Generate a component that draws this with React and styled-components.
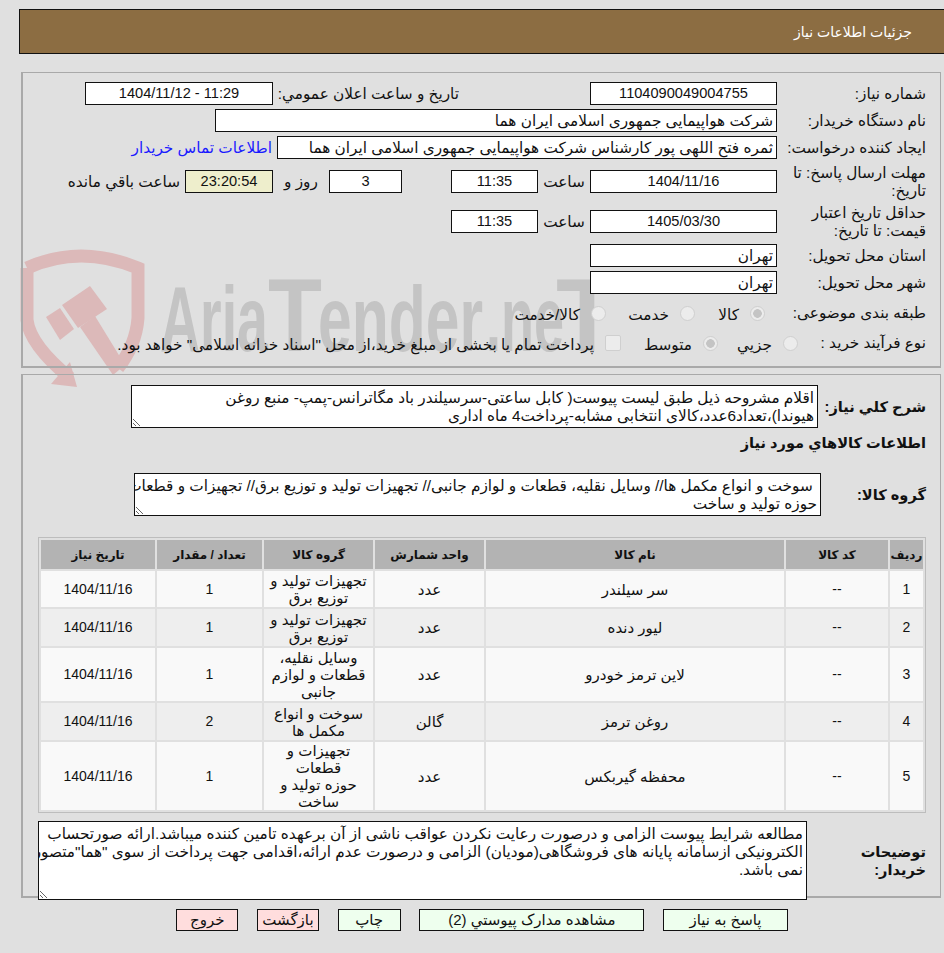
import React from 'react';
import styled, { createGlobalStyle } from 'styled-components';

const GlobalStyle = createGlobalStyle`
  html, body {
    margin: 0;
    background: #e0e0e0;
    overflow-x: hidden;
  }
  body {
    color: #111;
    font-family: "Liberation Sans", "DejaVu Sans", sans-serif;
    font-size: 15.3px;
  }
`;

const Page = styled.div`
  position: relative;
  direction: rtl;
  width: 944px;
  height: 953px;
  overflow: hidden;
  padding-top: 9px;
  box-sizing: border-box;
`;

const Watermark = styled.svg`
  position: absolute;
  left: 0;
  top: 0;
  z-index: 0;
`;

const Header = styled.div`
  position: relative;
  z-index: 1;
  box-sizing: border-box;
  height: 45px;
  margin-left: 19px;
  margin-right: -10px;
  padding-right: 41px;
  background: #8c6d42;
  border: 1px solid #111;
  color: #fff;
  font-size: 14px;
  line-height: 44px;
`;

const Panel = styled.div`
  position: relative;
  z-index: 1;
  box-sizing: border-box;
  width: 920px;
  margin: ${({ $top }) => $top}px 3px 0 0;
  padding: ${({ $pad }) => $pad};
  border: 2px solid #a9a9a9;
  border-width: 1px 1px 2px 2px;
  height: ${({ $height }) => $height}px;
`;

const Row = styled.div`
  display: flex;
  align-items: center;
  height: ${({ $height }) => $height || 23}px;
  margin-bottom: ${({ $gap }) => $gap || 0}px;
`;

const Label = styled.div`
  flex: none;
  box-sizing: border-box;
  width: ${({ $width }) => $width || 149}px;
  padding-left: 4px;
  line-height: 18px;
  font-size: ${({ $bold }) => ($bold ? '14.6px' : '15.3px')};
  font-weight: ${({ $bold }) => ($bold ? 700 : 400)};
`;

const Field = styled.div`
  flex: none;
  box-sizing: border-box;
  width: ${({ $width }) => $width}px;
  height: 23px;
  padding: 0 3px;
  margin-right: ${({ $before }) => $before || 0}px;
  background: ${({ $tint }) => ($tint ? '#eeeecc' : '#fff')};
  border: 1px solid #111;
  direction: ${({ $latin }) => ($latin ? 'ltr' : 'rtl')};
  font-size: ${({ $latin }) => ($latin ? '14.6px' : '15.3px')};
  line-height: 21px;
  text-align: ${({ $latin }) => ($latin ? 'center' : 'right')};
  white-space: nowrap;
  overflow: hidden;
`;

const Word = styled.div`
  flex: none;
  width: ${({ $width }) => $width}px;
  margin-right: ${({ $before }) => $before || 0}px;
  text-align: center;
  white-space: nowrap;
`;

const Caption = styled.div`
  flex: none;
  width: ${({ $width }) => $width}px;
  margin-right: ${({ $before }) => $before || 0}px;
  white-space: nowrap;
`;

const ContactLink = styled.a`
  margin-right: 5px;
  color: #1a1aff;
  white-space: nowrap;
`;

const Options = styled.div`
  display: flex;
  align-items: center;
  padding-right: ${({ $inset }) => $inset || 0}px;
`;

const Option = styled.div`
  display: flex;
  align-items: center;
  flex: none;
  width: ${({ $width }) => $width}px;
  white-space: nowrap;
`;

const OptionText = styled.span`
  margin-right: 11px;
  padding-top: 4px;
`;

const Radio = styled.span`
  flex: none;
  box-sizing: border-box;
  width: 15px;
  height: 15px;
  border-radius: 50%;
  background: ${({ $on }) =>
    $on ? 'radial-gradient(circle, #c4c4c4 0 4px, #ececec 4.6px)' : '#ececec'};
  border: 1px solid #cfcfcf;
`;

const Check = styled.span`
  flex: none;
  box-sizing: border-box;
  width: 16px;
  height: 16px;
  border-radius: 2px;
  background: #ececec;
  border: 1px solid #cfcfcf;
`;

const Box = styled.textarea`
  display: block;
  flex: none;
  box-sizing: border-box;
  width: ${({ $width }) => $width}px;
  height: ${({ $height }) => $height}px;
  padding: 3px 3px 0;
  background: #fff;
  border: 1px solid #111;
  border-radius: 0;
  color: #111;
  font-family: inherit;
  font-size: 15.3px;
  line-height: 18px;
  white-space: pre;
  overflow: hidden;
  outline: none;
`;

const Heading = styled.div`
  height: 30px;
  margin-bottom: 15px;
  font-size: 14.6px;
  font-weight: 700;
  line-height: 30px;
`;

const GoodsTable = styled.table`
  width: 888px;
  margin: 21px 0 8px;
  border: 1px solid #bdbdbd;
  border-spacing: 2px;
  table-layout: fixed;
  text-align: center;
`;

const HeadCell = styled.th`
  height: 29px;
  padding: 0;
  background: #b3b3b3;
  font-size: 12px;
  font-weight: 700;
  white-space: nowrap;
`;

const BodyRow = styled.tr`
  height: ${({ $height }) => $height}px;
  background: ${({ $odd }) => ($odd ? '#f9f9f9' : '#eeeeee')};
`;

const Cell = styled.td`
  padding: 0;
  line-height: 17px;
  white-space: pre-line;
  font-size: ${({ $latin }) => ($latin ? '14px' : '15px')};
`;

const ButtonBar = styled.div`
  position: relative;
  z-index: 1;
  display: flex;
  gap: 18.7px;
  margin-top: 11px;
  padding-right: 156px;
`;

const ActionButton = styled.button`
  box-sizing: border-box;
  width: ${({ $width }) => $width}px;
  height: 22px;
  padding: 0;
  background: ${({ $danger }) => ($danger ? '#ffdddd' : '#eeffee')};
  border: 1px solid #111;
  color: #111;
  font-family: inherit;
  font-size: 15px;
`;

const columns = [33, 102, 298, 109, 109, 105, 114];
const heads = ['رديف', 'كد كالا', 'نام كالا', 'واحد شمارش', 'گروه كالا', 'تعداد / مقدار', 'تاريخ نياز'];

const items = [
  { id: 1, name: 'سر سیلندر', unit: 'عدد', group: 'تجهیزات تولید و\nتوزیع برق', count: 1, height: 36 },
  { id: 2, name: 'لیور دنده', unit: 'عدد', group: 'تجهیزات تولید و\nتوزیع برق', count: 1, height: 37 },
  { id: 3, name: 'لاین ترمز خودرو', unit: 'عدد', group: 'وسایل نقلیه،\nقطعات و لوازم\nجانبی', count: 1, height: 53 },
  { id: 4, name: 'روغن ترمز', unit: 'گالن', group: 'سوخت و انواع\nمکمل ها', count: 2, height: 37 },
  { id: 5, name: 'محفظه گیربکس', unit: 'عدد', group: 'تجهیزات و قطعات\nحوزه تولید و\nساخت', count: 1, height: 53 },
];

const summary = 'اقلام مشروحه ذیل طبق لیست پیوست( کابل ساعتی-سرسیلندر باد مگاترانس-پمپ- منبع روغن\nهیوندا)،تعداد6عدد،کالای انتخابی مشابه-پرداخت4 ماه اداری';
const groups = ' سوخت و انواع مکمل ها// وسایل نقلیه، قطعات و لوازم جانبی// تجهیزات تولید و توزیع برق// تجهیزات و قطعات\nحوزه تولید و ساخت';
const notes = 'مطالعه شرایط پیوست الزامی و درصورت رعایت نکردن عواقب ناشی از آن برعهده تامین کننده میباشد.ارائه صورتحساب\nالکترونیکی ازسامانه پایانه های فروشگاهی(مودیان) الزامی و درصورت عدم ارائه،اقدامی جهت پرداخت از سوی "هما"متصور\nنمی باشد.';

const Logo = () => (
  <Watermark width="944" height="400" viewBox="0 0 944 400" aria-hidden="true">
    <g fill="none" stroke="#dcb9b9" strokeWidth="13">
      <path d="M27 268 Q80 244 138 268 L138 318 Q136 345 118 368" />
      <path d="M27 268 L27 320 Q30 345 70 378" />
    </g>
    <g fill="#dcb9b9">
      <path d="M70 362 L77 387 L51 384 Z" />
      <path d="M46 317 L60 308 L74 329 L60 340 Z" />
      <path d="M62 305 L90 286 L107 309 L78 328 Z" />
      <path d="M80 327 L95 316 L125 365 L113 375 Z" />
    </g>
    <g direction="ltr" fill="#c4c4c4" fontFamily="Liberation Sans, sans-serif" fontWeight="700" fontSize="92">
      <text x="160" y="351" textLength="108" lengthAdjust="spacingAndGlyphs">Aria</text>
      <text x="268" y="351" fontSize="104" textLength="54" lengthAdjust="spacingAndGlyphs">T</text>
      <text x="318" y="351" textLength="165" lengthAdjust="spacingAndGlyphs">ender</text>
      <text x="486" y="351" textLength="78" lengthAdjust="spacingAndGlyphs">.ne</text>
      <text x="556" y="351" fontSize="104" textLength="62" lengthAdjust="spacingAndGlyphs">T</text>
    </g>
  </Watermark>
);

const App = () => (
  <Page>
    <GlobalStyle />
    <Logo />
    <Header>جزئیات اطلاعات نیاز</Header>

    <Panel $top={18} $height={296} $pad="9px 14px 0 0">
      <Row $gap={4}>
        <Label>شماره نیاز:</Label>
        <Field $latin $width={187}>1104090049004755</Field>
        <Caption $before={131} $width={186}>تاریخ و ساعت اعلان عمومي:</Caption>
        <Field $latin $width={188}>1404/11/12 - 11:29</Field>
      </Row>
      <Row $gap={4}>
        <Label>نام دستگاه خریدار:</Label>
        <Field $width={562}>شرکت هواپیمایی جمهوری اسلامی ایران هما</Field>
      </Row>
      <Row $gap={6}>
        <Label>ایجاد کننده درخواست:</Label>
        <Field $width={500}>ثمره فتح اللهی پور کارشناس شرکت هواپیمایی جمهوری اسلامی ایران هما</Field>
        <ContactLink>اطلاعات تماس خریدار</ContactLink>
      </Row>
      <Row $height={33} $gap={7}>
        <Label>مهلت ارسال پاسخ: تا تاریخ:</Label>
        <Field $latin $width={187}>1404/11/16</Field>
        <Word $width={52}>ساعت</Word>
        <Field $latin $width={87}>11:35</Field>
        <Field $latin $width={73} $before={49}>3</Field>
        <Word $width={56}>روز و</Word>
        <Field $latin $tint $width={88}>23:20:54</Field>
        <Caption $before={5} $width={120}>ساعت باقي مانده</Caption>
      </Row>
      <Row $height={33} $gap={6}>
        <Label>حداقل تاریخ اعتبار قیمت: تا تاریخ:</Label>
        <Field $latin $width={187}>1405/03/30</Field>
        <Word $width={52}>ساعت</Word>
        <Field $latin $width={87}>11:35</Field>
      </Row>
      <Row $gap={4}>
        <Label>استان محل تحویل:</Label>
        <Field $width={187}>تهران</Field>
      </Row>
      <Row $gap={5}>
        <Label>شهر محل تحویل:</Label>
        <Field $width={187}>تهران</Field>
      </Row>
      <Row $height={28} $gap={2}>
        <Label>طبقه بندی موضوعی:</Label>
        <Options $inset={12}>
          <Option $width={70}><Radio $on /><OptionText>کالا</OptionText></Option>
          <Option $width={89}><Radio /><OptionText>خدمت</OptionText></Option>
          <Option $width={90}><Radio /><OptionText>کالا/خدمت</OptionText></Option>
        </Options>
      </Row>
      <Row $height={28}>
        <Label $width={128}>نوع فرآیند خرید :</Label>
        <Options>
          <Option $width={80}><Radio /><OptionText>جزيي</OptionText></Option>
          <Option $width={97}><Radio $on /><OptionText>متوسط</OptionText></Option>
          <Option $width={490}><Check /><OptionText>پرداخت تمام یا بخشی از مبلغ خرید،از محل "اسناد خزانه اسلامی" خواهد بود.</OptionText></Option>
        </Options>
      </Row>
    </Panel>

    <Panel $top={6} $height={524} $pad="10px 14px 0 0">
      <Row $height={43}>
        <Label $bold $width={108}>شرح كلي نياز:</Label>
        <Box readOnly dir="rtl" $width={687} $height={43} defaultValue={summary} />
      </Row>
      <Heading>اطلاعات كالاهاي مورد نياز</Heading>
      <Row $height={43}>
        <Label $bold $width={105}>گروه كالا:</Label>
        <Box readOnly dir="rtl" $width={687} $height={43} defaultValue={groups} />
      </Row>
      <GoodsTable>
        <colgroup>
          {columns.map((width, i) => <col key={i} width={width} />)}
        </colgroup>
        <thead>
          <tr>
            {heads.map((head) => <HeadCell key={head}>{head}</HeadCell>)}
          </tr>
        </thead>
        <tbody>
          {items.map((item, i) => (
            <BodyRow key={item.id} $odd={i % 2 === 0} $height={item.height}>
              <Cell $latin>{item.id}</Cell>
              <Cell $latin>--</Cell>
              <Cell>{item.name}</Cell>
              <Cell>{item.unit}</Cell>
              <Cell>{item.group}</Cell>
              <Cell $latin>{item.count}</Cell>
              <Cell $latin>1404/11/16</Cell>
            </BodyRow>
          ))}
        </tbody>
      </GoodsTable>
      <Row $height={79}>
        <Label $bold $width={119}>توضیحات خریدار:</Label>
        <Box readOnly dir="rtl" $width={769} $height={79} defaultValue={notes} />
      </Row>
    </Panel>

    <ButtonBar>
      <ActionButton $width={125}>پاسخ به نیاز</ActionButton>
      <ActionButton $width={225}>مشاهده مدارک پیوستي (2)</ActionButton>
      <ActionButton $width={63}>چاپ</ActionButton>
      <ActionButton $danger $width={62}>بازگشت</ActionButton>
      <ActionButton $danger $width={62}>خروج</ActionButton>
    </ButtonBar>
  </Page>
);

export default App;
